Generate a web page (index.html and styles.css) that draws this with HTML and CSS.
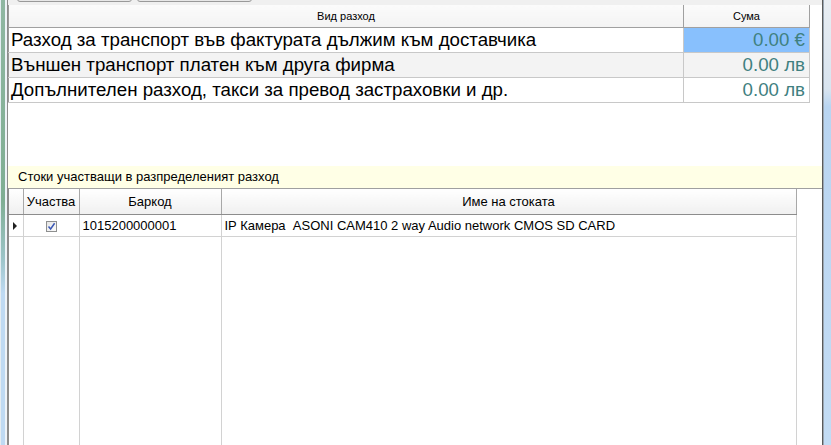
FILE: index.html
```html
<!DOCTYPE html>
<html lang="bg">
<head>
<meta charset="utf-8">
<title>Разход</title>
<link rel="stylesheet" href="styles.css">
</head>
<body>
<div class="window">
  <div class="frame-left"></div>
  <div class="content">
    <div class="toolbar">
      <div class="btn"></div>
      <div class="btn"></div>
    </div>
    <div class="top">
      <table class="costs">
        <colgroup><col class="c-name"><col class="c-sum"></colgroup>
        <thead>
          <tr><th>Вид разход</th><th>Сума</th></tr>
        </thead>
        <tbody>
          <tr><td>Разход за транспорт във фактурата дължим към доставчика</td><td class="amt sel">0.00 €</td></tr>
          <tr class="alt"><td>Външен транспорт платен към друга фирма</td><td class="amt">0.00 лв</td></tr>
          <tr><td>Допълнителен разход, такси за превод застраховки и др.</td><td class="amt">0.00 лв</td></tr>
        </tbody>
      </table>
    </div>
    <div class="caption">Стоки участващи в разпределеният разход</div>
    <div class="goods">
      <table class="items">
        <colgroup><col class="g-rh"><col class="g-chk"><col class="g-code"><col class="g-name"></colgroup>
        <thead>
          <tr><th></th><th>Участва</th><th>Баркод</th><th>Име на стоката</th></tr>
        </thead>
        <tbody>
          <tr class="row">
            <td class="rh"><span class="arrow"></span></td>
            <td class="chk"><span class="box"><svg width="9" height="9" viewBox="0 0 9 9"><path d="M1.5 4.5 L3.6 7 L7.6 1.2" fill="none" stroke="#3b58b5" stroke-width="1.5"/></svg></span></td>
            <td>1015200000001</td>
            <td>IP Камера&nbsp; ASONI CAM410 2 way Audio network CMOS SD CARD</td>
          </tr>
          <tr class="filler"><td></td><td></td><td></td><td></td></tr>
        </tbody>
      </table>
    </div>
  </div>
  <div class="frame-right"></div>
</div>
</body>
</html>
```

FILE: styles.css
```css
html, body {
  margin: 0;
  padding: 0;
}
body {
  width: 831px;
  height: 445px;
  overflow: hidden;
  background: #ffffff;
  font-family: "Liberation Sans", Arial, sans-serif;
}
.window {
  display: flex;
  width: 831px;
  height: 445px;
}
.frame-left {
  width: 8px;
  flex: none;
  background:
    linear-gradient(to right, #e4ecf2 0 1px, transparent 1px 5px, #eef3f8 5px 7px, #8c8c8c 7px 8px),
    linear-gradient(to bottom, #8fb7a2 0%, #7fae93 45%, #9cc4c8 58%, #bfdaf3 66%, #bfdaf3 100%);
}
.frame-right {
  width: 9px;
  flex: none;
  background:
    linear-gradient(to right, #5a5a5a 0 1px, #9aa6b2 1px 2px, transparent 2px 9px),
    linear-gradient(to bottom, #e9eef3 0%, #d9e4ef 20%, #b9d5f1 24%, #c3dcf4 100%);
}
.content {
  width: 814px;
  flex: none;
  display: flex;
  flex-direction: column;
  background: #ffffff;
}
.toolbar {
  height: 5px;
  flex: none;
  background: #f0f0f0;
  display: flex;
  gap: 5px;
  padding-left: 9px;
  overflow: hidden;
}
.btn {
  width: 115px;
  height: 12px;
  margin-top: -10px;
  border: 1px solid #9a9a9a;
  border-radius: 3px;
  background: #e8e8e8;
  box-sizing: border-box;
}
.top {
  height: 161px;
  flex: none;
  background: #ffffff;
}
table {
  border-collapse: collapse;
  table-layout: fixed;
}
.costs {
  width: 801px;
  border-left: 1px solid #9a9a9a;
}
.c-name { width: 675px; }
.c-sum { width: 126px; }
.costs th {
  height: 22px;
  padding: 0;
  font-weight: normal;
  font-size: 11px;
  color: #000;
  background: linear-gradient(to bottom, #fbfbfb, #f3f3f3);
  border-bottom: 1px solid #a0a0a0;
  border-right: 1px solid #a0a0a0;
  text-align: center;
  vertical-align: middle;
}
.costs td {
  height: 24px;
  padding: 0 0 0 2px;
  font-size: 18.7px;
  color: #000;
  border-bottom: 1px solid #c8c8c8;
  border-right: 1px solid #c8c8c8;
  white-space: nowrap;
  overflow: hidden;
  vertical-align: middle;
}
.costs tr.alt td { background: #f3f3f3; }
.costs td.amt {
  text-align: right;
  padding: 0 4px 0 0;
  color: #3f8080;
}
.costs td.sel { background: #88c0fd; }
.caption {
  height: 22px;
  flex: none;
  background: #ffffe6;
  font-size: 13px;
  line-height: 22px;
  padding-left: 10px;
  color: #000;
}
.goods {
  flex: 1;
  background: #ffffff;
  border-top: 1px solid #a0a0a0;
  border-left: 1px solid #8c8c8c;
  overflow: hidden;
}
.items {
  width: 787px;
  height: 100%;
}
.g-rh { width: 14px; }
.g-chk { width: 56px; }
.g-code { width: 142px; }
.g-name { width: 575px; }
.items th {
  height: 25px;
  padding: 0;
  font-weight: normal;
  font-size: 13px;
  background: linear-gradient(to bottom, #ffffff, #f0f0f0);
  border-right: 1px solid #a8a8a8;
  border-bottom: 1px solid #8c8c8c;
  text-align: center;
  vertical-align: middle;
}
.items td {
  padding: 0 0 0 3px;
  font-size: 13px;
  color: #000;
  border-right: 1px solid #d2d2d2;
  white-space: nowrap;
  overflow: hidden;
  vertical-align: middle;
}
.items tr.row td {
  height: 21px;
  border-bottom: 1px solid #d2d2d2;
}
.items td.rh { padding: 0; }
.arrow {
  display: block;
  width: 0;
  height: 0;
  margin-left: 4px;
  border-left: 4px solid #202020;
  border-top: 4px solid transparent;
  border-bottom: 4px solid transparent;
}
.items td.chk {
  text-align: center;
  padding: 0;
}
.box {
  display: inline-block;
  width: 9px;
  height: 9px;
  border: 1px solid #8e8f8f;
  background: linear-gradient(135deg, #e6e6e6, #fbfbfb);
  vertical-align: middle;
  line-height: 0;
}
.items tr.filler td {
  height: auto;
}
```
